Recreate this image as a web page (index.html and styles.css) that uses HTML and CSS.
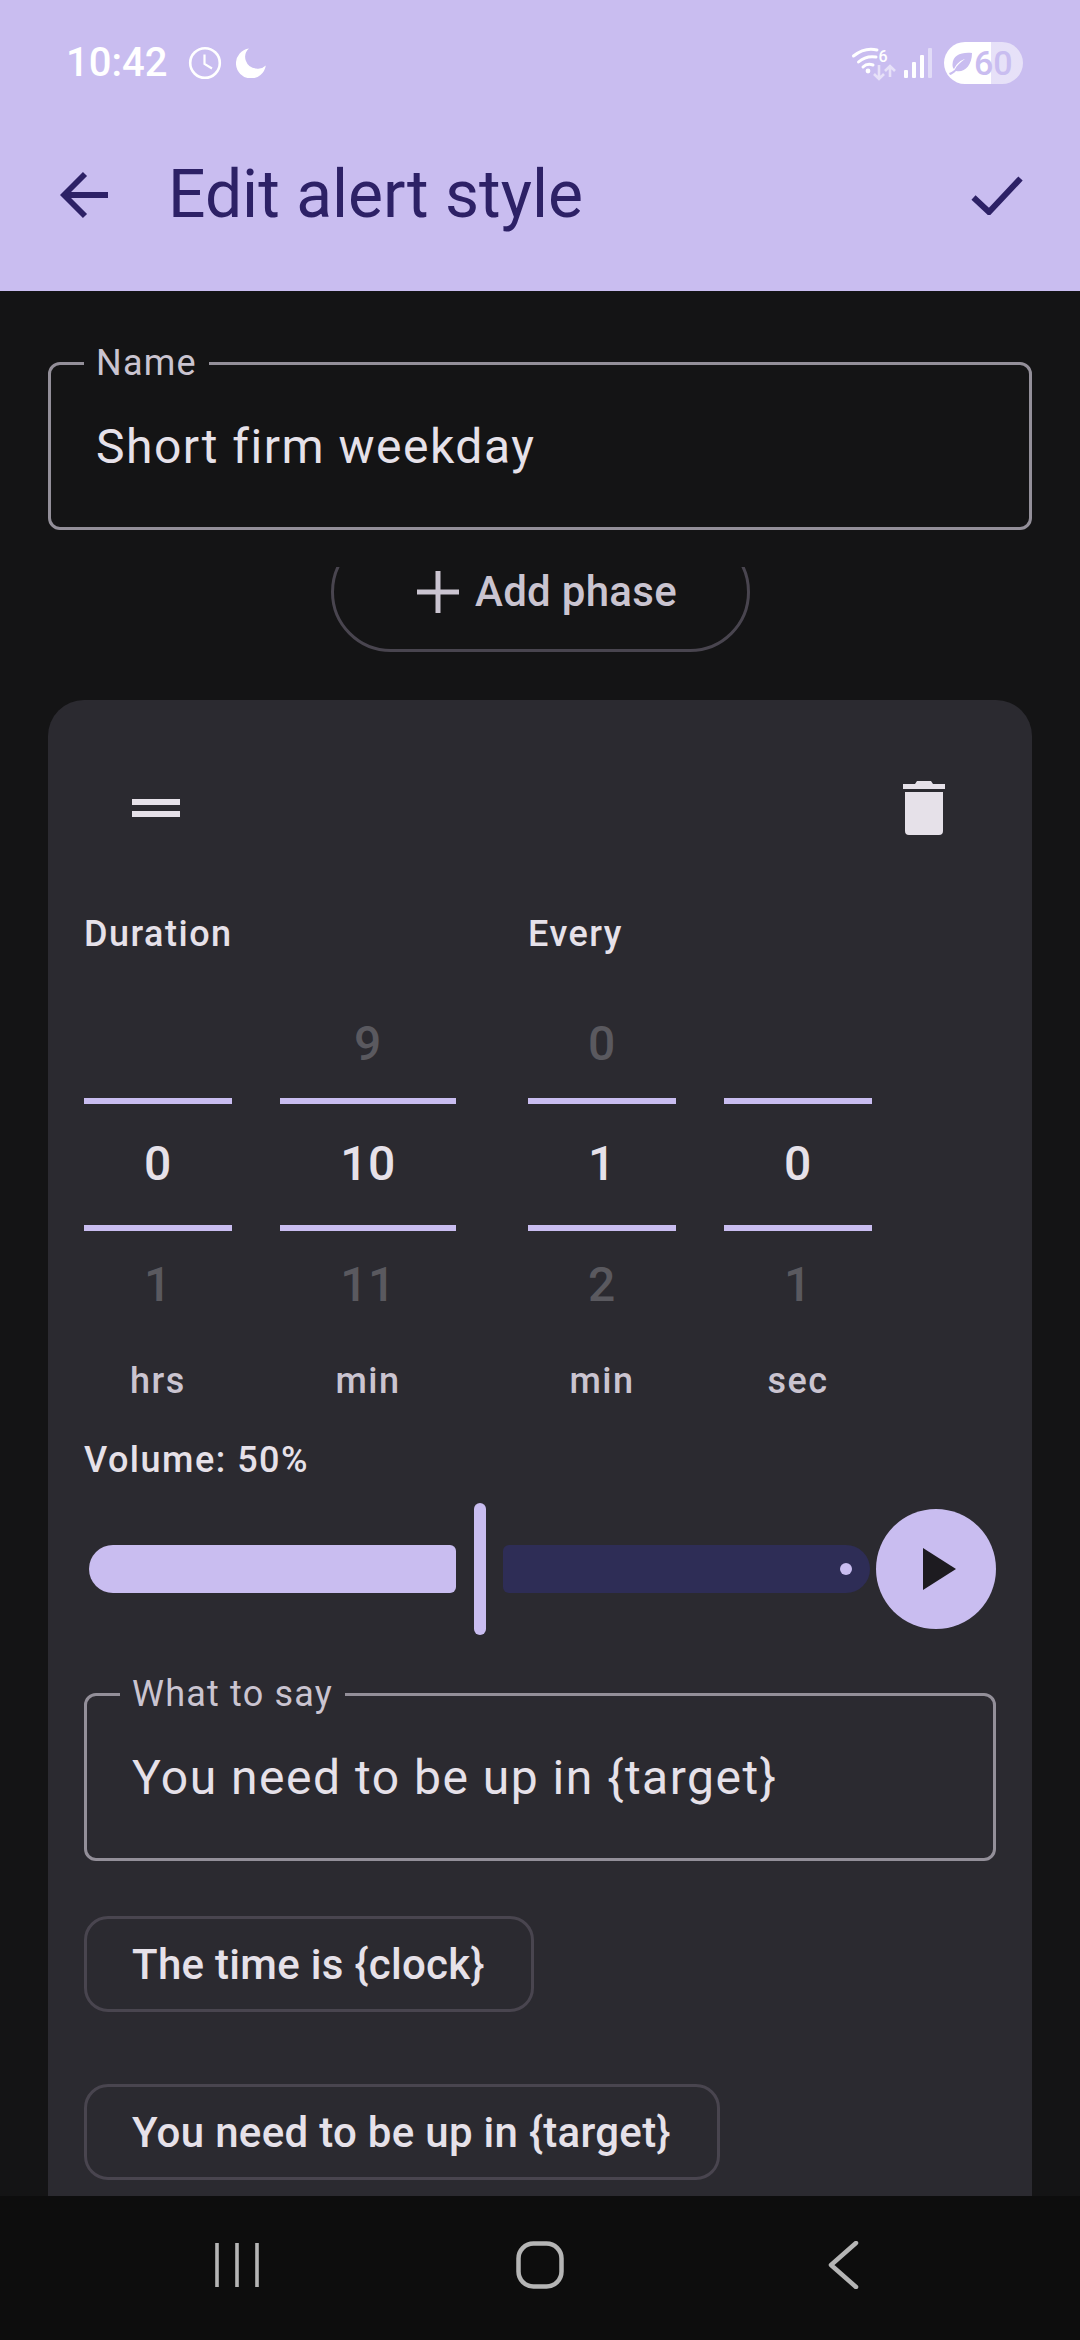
FILE: index.html
```html
<!DOCTYPE html>
<html lang="en">
<head>
<meta charset="utf-8">
<title>Edit alert style</title>
<link rel="stylesheet" href="styles.css">
</head>
<body>
<div class="app">
  <header class="appbar">
    <div class="status">
      <div class="status-left">
        <span class="time">10:42</span>
        <svg class="ic-clock" viewBox="0 0 34 34"><circle cx="17" cy="17" r="14.8" fill="none" stroke="#fff" stroke-width="2.6"/><path d="M16.5 8.5V18l7.5 4.5" fill="none" stroke="#fff" stroke-width="2.2"/></svg>
        <svg class="ic-moon" viewBox="0 0 30 30"><path d="M13 0.5A15 15 0 1 0 29.8 17.5 A11 11 0 0 1 20 20.5 A11.5 11.5 0 0 1 13 0.5Z" fill="#fff"/></svg>
      </div>
      <div class="status-right">
        <svg class="ic-wifi" viewBox="0 0 42 34"><g fill="none" stroke="#fff" stroke-width="3" stroke-linecap="round"><path d="M1.500 10C9 4 17 2 25 4"/><path d="M6.500 16C11 12 18 10 24 11"/><path d="M11 21C14 18 18 18 21 19"/></g><circle cx="16" cy="25" r="2.400" fill="#fff"/><text x="26.500" y="15.500" class="wifi-six">6</text><g fill="none" stroke="#fff" stroke-opacity=".55" stroke-width="2.600"><path d="M27 19V33M22 28l5 5 5-5"/><path d="M38 31V20M33 25l5-5 5 5"/></g></svg>
        <svg class="ic-signal" viewBox="0 0 28 30"><g fill="#fff"><rect x="0" y="22" width="4" height="8" rx="1"/><rect x="8" y="14" width="4" height="16" rx="1"/><rect x="16" y="7" width="4" height="23" rx="1"/><rect x="24" y="0" width="4" height="30" rx="1" opacity=".45"/></g></svg>
        <div class="battery">
          <svg class="ic-leaf" viewBox="0 0 24 24"><path d="M23 2C12 1 4 4 3.500 13.500C3.400 15.500 4 17 5 18C8 12 12 9 16 8C12 11 8 14 5.500 19C4 20 2 21.500 0 22L1 24C3 23.500 5 22 7 20C15 22 23 15 23 2Z"/></svg>
          <span class="battery-num">60</span>
        </div>
      </div>
    </div>
    <div class="toolbar">
      <svg class="ic-back" viewBox="0 0 48 48"><path d="M48 24H4M25 3 4 24l21 21" fill="none" stroke="#2d2166" stroke-width="5.800"/></svg>
      <h1 class="title">Edit alert style</h1>
      <svg class="ic-check" viewBox="0 0 52 39"><path d="M2.500 21.500 18 36 49.500 2.500" fill="none" stroke="#2d2166" stroke-width="6"/></svg>
    </div>
  </header>

  <main class="content">
    <fieldset class="field">
      <legend class="field-label">Name</legend>
      <div class="field-value">Short firm weekday</div>
    </fieldset>

    <div class="add-clip">
      <div class="add-btn">
        <svg class="ic-plus" viewBox="0 0 42 42"><path d="M21 0V42M0 21H42" stroke="#cac4d0" stroke-width="5"/></svg>
        <span>Add phase</span>
      </div>
    </div>

    <section class="card">
      <div class="card-top">
        <div class="handle"><i></i><i></i></div>
        <svg class="ic-trash" viewBox="0 0 42 54"><path d="M0 3H12L14 0H28L30 3H42V8H0ZM2 11H40V50Q40 54 36 54H6Q2 54 2 50Z" fill="#e6e1e9"/></svg>
      </div>

      <div class="pickers">
        <div class="picker-group">
          <div class="group-title">Duration</div>
          <div class="picker-cols">
            <div class="col c148">
              <div class="dim"></div><div class="cur">0</div><div class="dim">1</div><div class="unit">hrs</div>
            </div>
            <div class="col c176">
              <div class="dim">9</div><div class="cur">10</div><div class="dim">11</div><div class="unit">min</div>
            </div>
          </div>
        </div>
        <div class="picker-group">
          <div class="group-title">Every</div>
          <div class="picker-cols">
            <div class="col c148">
              <div class="dim">0</div><div class="cur">1</div><div class="dim">2</div><div class="unit">min</div>
            </div>
            <div class="col c148">
              <div class="dim"></div><div class="cur">0</div><div class="dim">1</div><div class="unit">sec</div>
            </div>
          </div>
        </div>
      </div>

      <div class="volume-label">Volume: 50%</div>
      <div class="volume-row">
        <div class="slider">
          <div class="track-on"></div>
          <div class="thumb"></div>
          <div class="track-off"><i class="stop"></i></div>
        </div>
        <div class="play"><svg class="ic-play" viewBox="0 0 33 42"><path d="M0 0 33 21 0 42Z" fill="#1d1b20"/></svg></div>
      </div>

      <fieldset class="field say">
        <legend class="field-label">What to say</legend>
        <div class="field-value">You need to be up in {target}</div>
      </fieldset>

      <div class="chip chip-first">The time is {clock}</div>
      <div class="chip">You need to be up in {target}</div>
    </section>
  </main>

  <nav class="navbar">
    <svg class="ic-recents" viewBox="0 0 44 44"><path d="M2 0V44M22 0V44M42 0V44" stroke="#b5b5b5" stroke-width="3.600"/></svg>
    <svg class="ic-home" viewBox="0 0 48 48"><rect x="2.500" y="2.500" width="43" height="43" rx="15" fill="none" stroke="#b5b5b5" stroke-width="4.500"/></svg>
    <svg class="ic-navback" viewBox="0 0 32 48"><path d="M29 2 4 24 29 46" fill="none" stroke="#b5b5b5" stroke-width="4.500" stroke-linecap="round" stroke-linejoin="round"/></svg>
  </nav>
</div>
</body>
</html>
```

FILE: styles.css
```css
* { box-sizing: border-box; }
html, body { margin: 0; padding: 0; }
body { background: #141415; font-family: Roboto, "Noto Sans", sans-serif; color: #e6e1e9; }
.app { width: 1080px; height: 2340px; display: flex; flex-direction: column; overflow: hidden; }

.appbar { height: 291px; background: #c9bdf0; flex: none; }
.status { height: 126px; padding: 42px 57px 0 66px; display: flex; justify-content: space-between; align-items: flex-start; }
.status-left { display: flex; align-items: center; height: 42px; }
.time { font-size: 40px; line-height: 42px; font-weight: 500; color: #fff; width: 122px; }
.ic-clock { width: 34px; height: 34px; }
.ic-moon { width: 30px; height: 30px; margin-left: 14px; }
.status-right { display: flex; align-items: center; height: 42px; }
.ic-wifi { width: 42px; height: 34px; overflow: visible; }
.wifi-six { font: 500 16px Roboto, sans-serif; fill: #fff; }
.ic-signal { width: 28px; height: 30px; margin-left: 10px; }
.battery { width: 79px; height: 42px; margin-left: 12px; border-radius: 21px; display: flex; align-items: center; padding-left: 5px;
  background: linear-gradient(to right, #fff 47px, rgba(255,255,255,.55) 47px); }
.ic-leaf { width: 24px; height: 24px; fill: #c9bdf0; }
.battery-num { font-size: 34px; line-height: 42px; font-weight: 500; color: #c9bdf0; margin-left: 1px; }

.toolbar { height: 165px; display: flex; align-items: flex-start; padding: 45px 57px 0 60px; }
.ic-back { width: 48px; height: 48px; flex: none; }
.title { margin: -12px 0 0 60px; font-size: 66px; line-height: 72px; font-weight: 400; color: #2d2166; flex: 1; }
.ic-check { width: 52px; height: 39px; margin-top: 5px; flex: none; }

.content { flex: 1; min-height: 0; overflow: hidden; padding: 54px 48px 0; display: flex; flex-direction: column; }

.field { margin: 0; padding: 0 45px; height: 185px; border: 3px solid #938f99; border-radius: 12px; min-width: 0; flex: none; }
.field-label { padding: 0 12px; margin-left: -12px; font-size: 36px; line-height: 36px; letter-spacing: 1.2px; color: #cac4d0; }
.field-value { font-size: 48px; line-height: 60px; letter-spacing: 1.5px; color: #e6e1e9; margin-top: 36px; white-space: nowrap; }

.add-clip { height: 85px; margin-top: 37px; overflow: hidden; flex: none; }
.add-btn { width: 419px; height: 120px; margin: -35px auto 0; border: 3px solid #49454f; border-radius: 60px; display: flex; align-items: center; justify-content: center; gap: 16px; padding-left: 14px;
  font-size: 42px; line-height: 48px; font-weight: 500; letter-spacing: .3px; color: #cac4d0; }
.ic-plus { width: 42px; height: 42px; flex: none; }

.card { margin-top: 48px; background: #2b2a30; border-radius: 36px 36px 0 0; padding: 81px 36px 0; flex: 1; min-height: 0; overflow: hidden; }
.card-top { display: flex; justify-content: space-between; align-items: center; padding: 0 51px 0 48px; height: 54px; }
.handle { display: flex; flex-direction: column; gap: 6px; width: 48px; }
.handle i { display: block; height: 6px; background: #e6e1e9; }
.ic-trash { width: 42px; height: 54px; }

.pickers { display: flex; gap: 72px; margin-top: 75px; }
.group-title { font-size: 36px; line-height: 48px; font-weight: 500; letter-spacing: 1.5px; color: #e6e1e9; }
.picker-cols { display: flex; gap: 48px; margin-top: 32px; }
.col { display: flex; flex-direction: column; text-align: center; }
.c148 { width: 148px; }
.c176 { width: 176px; }
.dim, .cur { font-size: 48px; line-height: 60px; letter-spacing: .5px; font-weight: 500; }
.dim { height: 108px; padding-top: 24px; color: #5a595f; }
.cur { height: 133px; padding-top: 30px; border-top: 6px solid #c9bdf0; border-bottom: 6px solid #c9bdf0; }
.unit { margin-top: 18px; font-size: 36px; line-height: 48px; font-weight: 500; letter-spacing: 1.5px; color: #cac4d0; }

.volume-label { margin-top: 31px; font-size: 36px; line-height: 48px; font-weight: 500; letter-spacing: 1.5px; color: #e6e1e9; }
.volume-row { display: flex; align-items: center; margin-top: 19px; height: 132px; }
.slider { width: 787px; display: flex; align-items: center; margin-left: 5px; }
.track-on { width: 367px; height: 48px; background: #c9bdf0; border-radius: 24px 6px 6px 24px; }
.thumb { width: 12px; height: 132px; margin: 0 17px 0 18px; background: #c9bdf0; border-radius: 6px; }
.track-off { width: 367px; height: 48px; background: #2e2d56; border-radius: 6px 24px 24px 6px; display: flex; align-items: center; justify-content: flex-end; padding-right: 18px; }
.stop { width: 12px; height: 12px; background: #c9bdf0; border-radius: 50%; }
.play { width: 120px; height: 120px; border-radius: 50%; background: #c9bdf0; margin-left: 6px; display: flex; align-items: center; justify-content: center; flex: none; }
.ic-play { width: 33px; height: 42px; margin-left: 6px; }

.say { margin-top: 41px; }
.chip { width: max-content; height: 96px; padding: 0 46px 0 45px; border: 3px solid #49454f; border-radius: 24px; display: flex; align-items: center; font-size: 42px; font-weight: 500; letter-spacing: .3px; color: #e6e1e9; margin-top: 72px; }
.chip-first { margin-top: 55px; }

.navbar { height: 144px; flex: none; background: #0d0d0d; position: relative; display: flex; align-items: flex-start; padding-top: 45px; }
.ic-recents { width: 44px; height: 44px; margin: 2px 0 0 215px; }
.ic-home { width: 48px; height: 48px; margin-left: 257px; }
.ic-navback { width: 32px; height: 48px; margin-left: 263px; }
```
